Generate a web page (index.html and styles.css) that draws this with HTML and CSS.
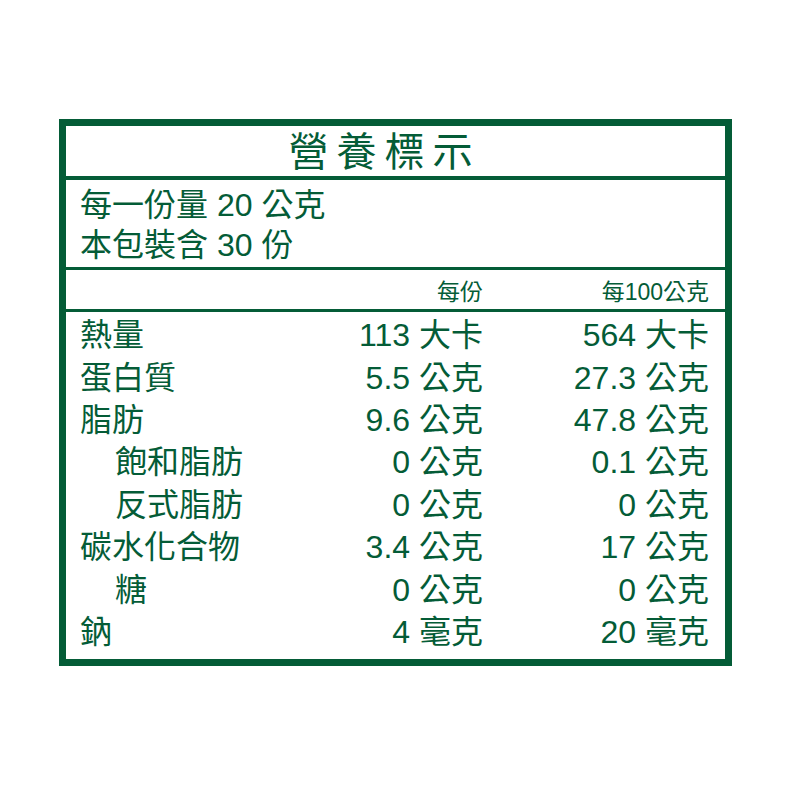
FILE: index.html
```html
<!DOCTYPE html>
<html lang="zh-Hant">
<head>
<meta charset="utf-8">
<title>營養標示</title>
<link rel="stylesheet" href="styles.css">
</head>
<body>
<div class="page">
  <div class="label">
    <div class="title">營養標示</div>
    <div class="serving">
      <div class="line">每一份量 20 公克</div>
      <div class="line">本包裝含 30 份</div>
    </div>
    <div class="head">
      <span></span>
      <span class="num">每份</span>
      <span class="num">每100公克</span>
    </div>
    <div class="rows">
      <div class="row"><span>熱量</span><span class="num">113 大卡</span><span class="num">564 大卡</span></div>
      <div class="row"><span>蛋白質</span><span class="num">5.5 公克</span><span class="num">27.3 公克</span></div>
      <div class="row"><span>脂肪</span><span class="num">9.6 公克</span><span class="num">47.8 公克</span></div>
      <div class="row"><span class="sub">飽和脂肪</span><span class="num">0 公克</span><span class="num">0.1 公克</span></div>
      <div class="row"><span class="sub">反式脂肪</span><span class="num">0 公克</span><span class="num">0 公克</span></div>
      <div class="row"><span>碳水化合物</span><span class="num">3.4 公克</span><span class="num">17 公克</span></div>
      <div class="row"><span class="sub">糖</span><span class="num">0 公克</span><span class="num">0 公克</span></div>
      <div class="row"><span>鈉</span><span class="num">4 毫克</span><span class="num">20 毫克</span></div>
    </div>
  </div>
</div>
</body>
</html>
```
FILE: styles.css
```css
html, body {
  margin: 0;
  padding: 0;
  background: #ffffff;
}
.page {
  padding: 119px 0 0 59px;
}
.label {
  box-sizing: border-box;
  width: 673px;
  height: 547px;
  border: 7px solid #045c37;
  color: #045c37;
  font-family: "Liberation Sans", "Noto Sans CJK TC", sans-serif;
  display: flex;
  flex-direction: column;
}
.title {
  flex: none;
  height: 54px;
  box-sizing: border-box;
  border-bottom: 4px solid #045c37;
  display: flex;
  align-items: center;
  justify-content: center;
  font-size: 40px;
  letter-spacing: 8px;
  padding: 2px 22px 0 0;
  line-height: 1;
}
.serving {
  flex: none;
  height: 90px;
  box-sizing: border-box;
  border-bottom: 3px solid #045c37;
  padding: 5px 0 0 14px;
  font-size: 32px;
}
.serving .line {
  height: 40px;
  line-height: 40px;
}
.head, .row {
  display: grid;
  grid-template-columns: 1fr 200px 226px;
  padding: 0 16px 0 14px;
  align-items: center;
}
.head {
  flex: none;
  height: 42px;
  box-sizing: border-box;
  padding-top: 5px;
  border-bottom: 3px solid #045c37;
  font-size: 23px;
  line-height: 1;
}
.rows {
  display: flex;
  flex-direction: column;
  padding-top: 2px;
}
.row {
  flex: none;
  height: 42.4px;
  font-size: 32px;
  line-height: 1;
}
.num {
  text-align: right;
}
.sub {
  padding-left: 35px;
}
```
